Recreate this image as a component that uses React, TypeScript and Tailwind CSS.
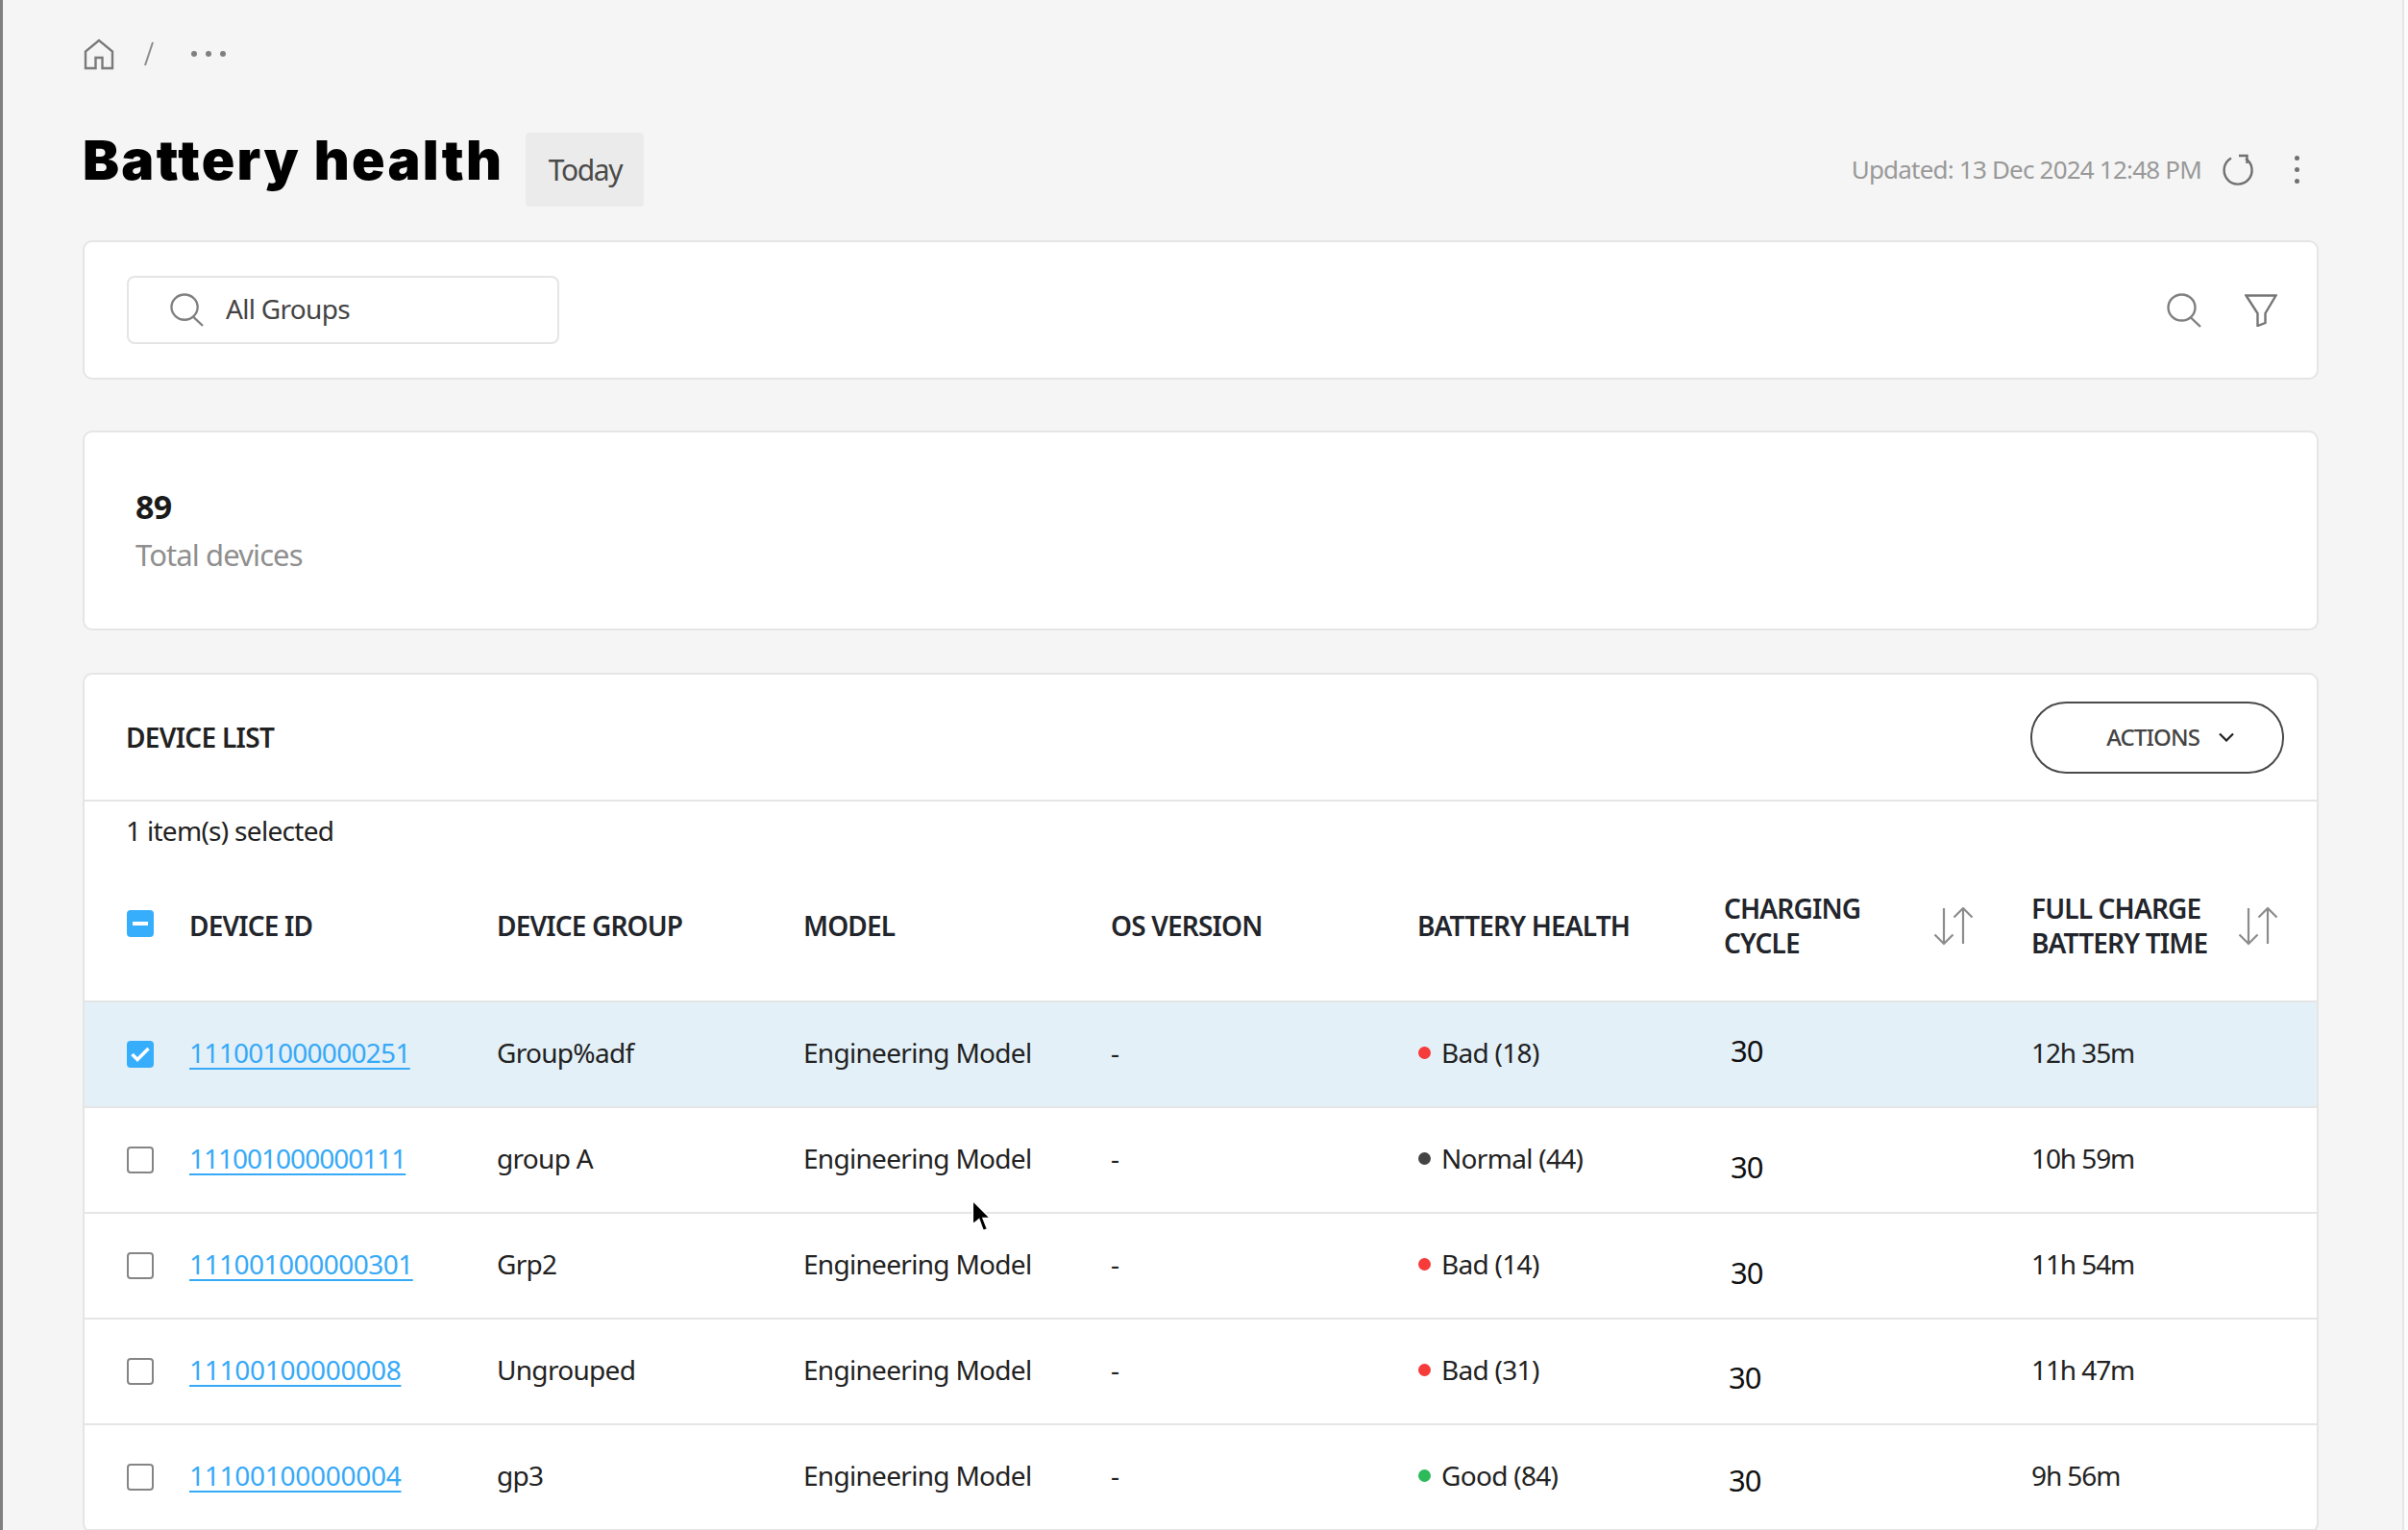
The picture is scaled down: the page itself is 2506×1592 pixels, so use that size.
const rows = [
  { id: "111001000000251", link: "tracking-[-0.7px]", group: "Group%adf", dot: "bg-[#f63b3b]", health: "Bad (18)", time: "12h 35m", cycle: "mb-[3px] pl-[7px]", selected: true },
  { id: "111001000000111", link: "tracking-[-1px]", group: "group A", dot: "bg-[#444444]", health: "Normal (44)", time: "10h 59m", cycle: "mt-[18px] pl-[7px]", selected: false },
  { id: "111001000000301", link: "tracking-[-0.5px]", group: "Grp2", dot: "bg-[#f63b3b]", health: "Bad (14)", time: "11h 54m", cycle: "mt-[18px] pl-[7px]", selected: false },
  { id: "11100100000008", link: "tracking-[-0.27px]", group: "Ungrouped", dot: "bg-[#f63b3b]", health: "Bad (31)", time: "11h 47m", cycle: "mt-[16px] pl-[5px]", selected: false },
  { id: "11100100000004", link: "tracking-[-0.27px]", group: "gp3", dot: "bg-[#2dbb5a]", health: "Good (84)", time: "9h 56m", cycle: "mt-[10px] pl-[5px]", selected: false },
];

const gridClassName = "grid grid-cols-[66px_320px_319px_320px_319px_319px_320px_1fr] items-center pl-[43px]";
const cardClassName = "rounded-[10px] border-2 border-[#e5e5e5] bg-white";
const headClassName = "text-[28px] leading-[36px] font-semibold tracking-[-0.85px] text-[#22252b]";

const SearchIcon = ({ className }: { className: string }) => (
  <svg viewBox="0 0 36 36" fill="none" stroke="#808080" strokeWidth="2.4" className={className}>
    <ellipse cx="15.5" cy="15" rx="14" ry="13.5" />
    <path d="M25 25.5 35 35" />
  </svg>
);

const SortIcon = () => (
  <svg viewBox="0 0 42 40" fill="none" stroke="#8c8c8c" strokeWidth="2.2" className="mt-[2px] h-[40px] w-[42px] shrink-0">
    <path d="M11 1v37M1.500 28.500 11 38l9.500-9.500" />
    <path d="M31 38V1M21.500 10.500 31 1l9.500 9.500" />
  </svg>
);

const App = () => {
  return (
    <div className="flex h-[1592px] overflow-hidden bg-[#fbfbfb] font-['Noto_Sans',sans-serif] text-[28px] tracking-[-0.7px] text-[#222222]">
      <div className="w-[3px] shrink-0 bg-[#808080]" />

      <main className="relative w-[2499px] shrink-0 border-r-2 border-[#e5e5e5] bg-[#f5f5f5] pr-[87px] pl-[83px]">
        <nav className="mt-[40px] flex h-[32px] items-center">
          <svg viewBox="0 0 32 33" fill="none" stroke="#7a7a7a" strokeWidth="2.4" className="ml-[1px] h-[33px] w-[32px]">
            <path d="M2 31V13.500L16 2l14 11.500V31H19.500V20h-7v11Z" />
          </svg>
          <svg viewBox="0 0 12 26" fill="none" stroke="#8c8c8c" strokeWidth="2" className="ml-[30px] h-[26px] w-[12px]">
            <path d="M10 1 2 25" />
          </svg>
          <div className="ml-[38px] flex gap-[9px]">
            <span className="h-[6px] w-[6px] rounded-full bg-[#808080]" />
            <span className="h-[6px] w-[6px] rounded-full bg-[#808080]" />
            <span className="h-[6px] w-[6px] rounded-full bg-[#808080]" />
          </div>
        </nav>

        <header className="mt-[66px] flex h-[77px] items-center">
          <h1 className="mb-[20px] font-['Inter',sans-serif] text-[57px] leading-none font-black tracking-[2.3px] text-black">Battery health</h1>
          <span className="ml-[23px] flex h-[77px] w-[123px] items-center justify-center rounded-[4px] bg-[#ebebeb] text-[30px] tracking-[-1.4px] text-[#4a4a4a]">
            Today
          </span>
          <span className="ml-auto text-[26px] tracking-[-0.8px] text-[#999999]">Updated: 13 Dec 2024 12:48 PM</span>
          <svg viewBox="0 0 36 36" fill="none" stroke="#707070" strokeWidth="2.4" className="ml-[20px] h-[36px] w-[36px]">
            <path d="M11 5.500a14.500 14.500 0 1 0 15 .500" />
            <path d="M19 3h8.500v8" />
          </svg>
          <div className="mr-[20px] ml-[41px] flex flex-col gap-[7px]">
            <span className="h-[5px] w-[5px] rounded-full bg-[#707070]" />
            <span className="h-[5px] w-[5px] rounded-full bg-[#707070]" />
            <span className="h-[5px] w-[5px] rounded-full bg-[#707070]" />
          </div>
        </header>

        <section className={`${cardClassName} mt-[35px] flex h-[145px] items-center pr-[41px] pl-[44px]`}>
          <div className="flex h-[71px] w-[450px] items-center rounded-[8px] border-2 border-[#e5e5e5] pl-[43px]">
            <SearchIcon className="h-[35px] w-[35px]" />
            <span className="mb-[4px] ml-[23px] text-[28px] text-[#444444]">All Groups</span>
          </div>
          <SearchIcon className="ml-auto h-[36px] w-[36px]" />
          <svg viewBox="0 0 34 34" fill="none" stroke="#757575" strokeWidth="2.4" className="ml-[45px] h-[34px] w-[34px]">
            <path d="M1.500 1.500h31L21.500 20v10l-8 3V20Z" />
          </svg>
        </section>

        <section className={`${cardClassName} mt-[53px] flex h-[208px] flex-col pt-[59px] pl-[53px]`}>
          <span className="text-[34px] leading-[36px] font-bold text-[#1a1a1a]">89</span>
          <span className="mt-[12px] text-[31px] leading-[40px] tracking-[-0.9px] text-[#8f8f8f]">Total devices</span>
        </section>

        <section className={`${cardClassName} mt-[44px] overflow-hidden`}>
          <div className="flex h-[132px] items-center justify-between border-b-2 border-[#e5e5e5] pr-[34px] pl-[43px]">
            <h2 className="text-[28px] font-semibold text-[#222222]">DEVICE LIST</h2>
            <button
              type="button"
              className="flex h-[75px] w-[264px] items-center justify-end rounded-[37px] border-2 border-[#4a4a4a] pr-[50px] text-[24px] font-medium tracking-[-0.9px] text-[#444444]"
            >
              ACTIONS
              <svg viewBox="0 0 16 10" fill="none" stroke="#222222" strokeWidth="2.2" className="ml-[20px] h-[10px] w-[16px]">
                <path d="m1 1.500 7 7 7-7" />
              </svg>
            </button>
          </div>

          <div className="flex h-[62px] items-center pb-[3px] pl-[43px] text-[#222222]">1 item(s) selected</div>

          <div className={`${gridClassName} h-[147px] border-b-2 border-[#e5e5e5] pb-[11px]`}>
            <span className="mb-[4px] ml-[1px] flex h-[28px] w-[28px] items-center justify-center rounded-[4px] bg-[#36aefc]">
              <span className="h-[4px] w-[16px] bg-white" />
            </span>
            <span className={headClassName}>DEVICE ID</span>
            <span className={headClassName}>DEVICE GROUP</span>
            <span className={headClassName}>MODEL</span>
            <span className={headClassName}>OS VERSION</span>
            <span className={headClassName}>BATTERY HEALTH</span>
            <div className="flex items-center pr-[60px]">
              <span className={`${headClassName} flex-1`}>
                CHARGING
                <br />
                CYCLE
              </span>
              <SortIcon />
            </div>
            <div className="flex items-center pr-[40px]">
              <span className={`${headClassName} flex-1`}>
                FULL CHARGE
                <br />
                BATTERY TIME
              </span>
              <SortIcon />
            </div>
          </div>

          {rows.map((row) => (
            <div
              key={row.id}
              className={`${gridClassName} h-[110px] border-b-2 border-[#e5e5e5] pb-[4px] ${row.selected ? "bg-[#e3f0f8]" : ""}`}
            >
              {row.selected ? (
                <span className="mt-[4px] ml-[1px] flex h-[28px] w-[28px] items-center justify-center rounded-[4px] bg-[#36aefc]">
                  <svg viewBox="0 0 20 16" fill="none" stroke="white" strokeWidth="3.500" className="h-[16px] w-[20px]">
                    <path d="m1.500 8 5.500 5.500L18.500 2" />
                  </svg>
                </span>
              ) : (
                <span className="mt-[4px] ml-[1px] h-[28px] w-[28px] rounded-[4px] border-2 border-[#858585] bg-white" />
              )}
              <a href="#" className={`w-fit text-[#36a9f7] underline decoration-2 underline-offset-[5px] ${row.link}`}>
                {row.id}
              </a>
              <span>{row.group}</span>
              <span>Engineering Model</span>
              <span>-</span>
              <span className="ml-[1px] flex items-center">
                <span className={`h-[13px] w-[13px] rounded-full ${row.dot}`} />
                <span className="ml-[11px]">{row.health}</span>
              </span>
              <span className={`text-[31px] tracking-[-1px] text-[#111111] ${row.cycle}`}>30</span>
              <span className="tracking-[-1.1px]">{row.time}</span>
            </div>
          ))}
        </section>

        {/* mouse pointer caught in the capture */}
        <svg viewBox="0 0 20 32" className="absolute top-[1248px] left-[1007px] h-[35px] w-[22px]">
          <path d="M2 1v23l6-5 4 11 4-2-4-10h7Z" fill="#000000" stroke="#ffffff" strokeWidth="1.500" />
        </svg>
      </main>
    </div>
  );
};

export default App;
